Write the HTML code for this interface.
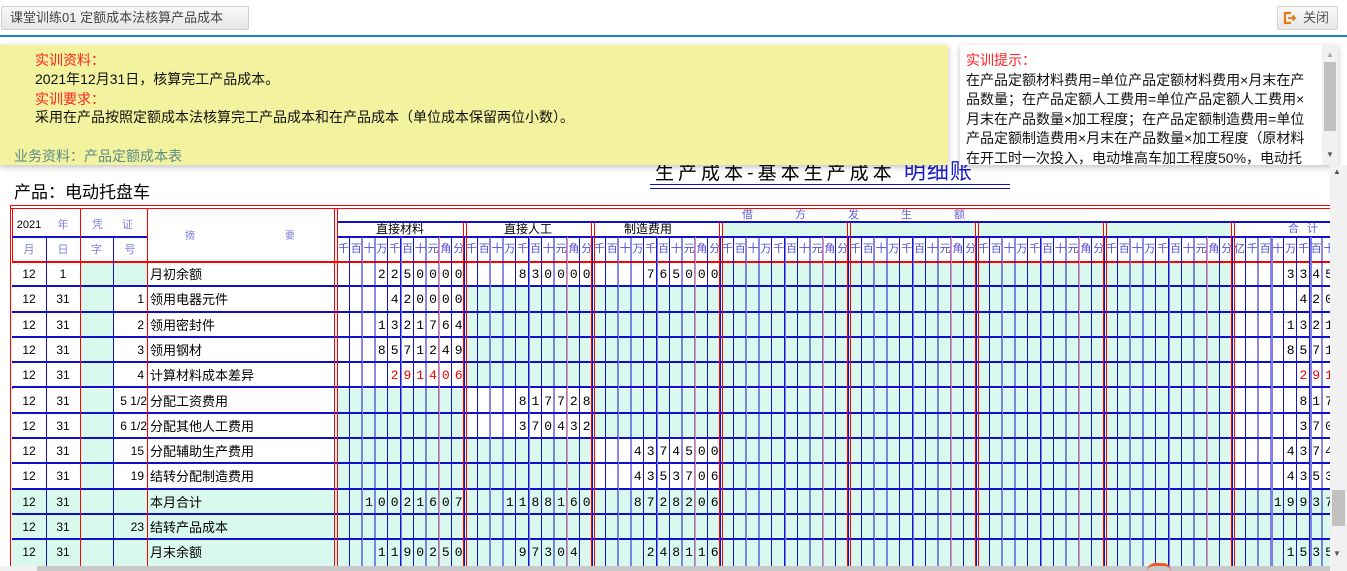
<!DOCTYPE html>
<html><head><meta charset="utf-8">
<style>
*{margin:0;padding:0;box-sizing:border-box}
html,body{width:1347px;height:571px;overflow:hidden}
body{background:#fff;font-family:"Liberation Sans","Noto Sans CJK SC",sans-serif;position:relative}
.a{position:absolute;white-space:nowrap}
.vb{position:absolute;width:1px;background:#1414d0}
.vr{position:absolute;width:1px;background:#f00}
.row{position:absolute;left:12px;width:1318px;height:25.3px;background:#d9f9ee;border-bottom:2px solid #1010cc}
.w{position:absolute;top:0;height:23.3px;background:#fff}
.g{position:absolute;top:237px;height:334px;width:128px;background-image:repeating-linear-gradient(to right,transparent 0 11.8px,#1414d0 11.8px 12.8px)}
.lb{position:absolute;width:1px;background:#8080e8}
.lp{position:absolute;width:1px;background:#f09090}
.dr{position:absolute;width:4px;border-left:1px solid #f00;border-right:1px solid #f00}
.lab{position:absolute;top:242px;font-size:11px;letter-spacing:1.8px;padding-left:1px;color:#5050d0;white-space:nowrap;line-height:14px}
.d{position:absolute;font-family:"Liberation Mono",monospace;font-size:13px;letter-spacing:5px;padding-left:2.5px;line-height:25px;white-space:nowrap;color:#000}
.red{color:#e00}
.c{position:absolute;font-size:12px;line-height:25px;text-align:center;color:#000;white-space:nowrap}
.s{position:absolute;font-size:13px;line-height:25px;color:#000;white-space:nowrap}
</style></head><body>

<div class="a" style="left:1px;top:6px;width:248px;height:24px;border:1px solid #d0d0d0;border-radius:2px;background:linear-gradient(#f8f8f8,#e6e6e6);font-size:13px;color:#444;line-height:22px;padding-left:8px">课堂训练01 定额成本法核算产品成本</div>
<div class="a" style="left:1277px;top:6px;width:61px;height:24px;border:1px solid #d4d4d4;border-radius:2px;background:linear-gradient(#f8f8f8,#e8e8e8);font-size:13px;color:#555;line-height:22px;padding-left:25px">关闭</div>
<svg class="a" style="left:1283px;top:11px" width="14" height="14" viewBox="0 0 14 14"><path d="M8 2H2v10h6" fill="none" stroke="#e87a10" stroke-width="2.2"/><path d="M5 7h7M9.5 4.5L12 7l-2.5 2.5" fill="none" stroke="#e87a10" stroke-width="1.8"/></svg>
<div class="a" style="left:0;top:35px;width:1347px;height:2px;background:#1b84d2"></div>

<div class="a" style="left:655px;top:157px;font-size:19px;letter-spacing:4px;line-height:26px;font-family:'Noto Sans CJK SC',sans-serif;color:#000">生产成本-基本生产成本 <span style="color:#1a1ad0;font-size:22px;letter-spacing:1px">明细账</span></div>
<div class="a" style="left:650px;top:184px;width:360px;height:5px;border-top:1px solid #1010c0;border-bottom:1px solid #1010c0"></div>

<div class="a" style="left:0;top:45px;width:948px;height:120px;background:#f3f29e;box-shadow:0 2px 6px rgba(0,0,0,.25);font-size:14px;line-height:19.5px">
<div class="a" style="left:35px;top:6px;color:#f22">实训资料：</div>
<div class="a" style="left:35px;top:25px;color:#111">2021年12月31日，核算完工产品成本。</div>
<div class="a" style="left:35px;top:45px;color:#f22">实训要求：</div>
<div class="a" style="left:35px;top:63px;color:#111">采用在产品按照定额成本法核算完工产品成本和在产品成本（单位成本保留两位小数）。</div>
<div class="a" style="left:14px;top:102px;color:#5b8b88">业务资料：产品定额成本表</div>
</div>
<div class="a" style="left:960px;top:45px;width:378px;height:120px;background:#fff;box-shadow:0 2px 6px rgba(0,0,0,.25);overflow:hidden;font-size:14px;line-height:19.5px">
<div style="position:absolute;left:6px;top:6px;width:352px;color:#111;white-space:normal"><span style="color:#f22">实训提示：</span><br>在产品定额材料费用=单位产品定额材料费用×月末在产品数量；在产品定额人工费用=单位产品定额人工费用×月末在产品数量×加工程度；在产品定额制造费用=单位产品定额制造费用×月末在产品数量×加工程度（原材料在开工时一次投入，电动堆高车加工程度50%，电动托</div>
<div class="a" style="left:362px;top:0;width:16px;height:120px;background:#f1f1f1"></div>
<div class="a" style="left:364px;top:17px;width:12px;height:69px;background:#c1c1c1"></div>
<div class="a" style="left:366px;top:6px;font-size:8px;line-height:8px;color:#aaa">▲</div>
<div class="a" style="left:366px;top:106px;font-size:8px;line-height:8px;color:#555">▼</div>
</div>

<div class="a" style="left:14px;top:181px;font-size:17px;line-height:24px;color:#000">产品：电动托盘车</div>

<div class="a" style="left:10px;top:205px;width:1320px;height:1px;background:#f00"></div>
<div class="a" style="left:10px;top:208px;width:1320px;height:1px;background:#f00"></div>
<div class="vr" style="left:10px;top:205px;height:366px"></div>
<div class="vr" style="left:12px;top:208px;height:363px"></div>

<div class="row" style="top:262px"><div class="w" style="left:0;width:68px"></div><div class="w" style="left:135px;width:574px"></div><div class="w" style="left:1221px;width:97px"></div></div>
<div class="row" style="top:287.3px"><div class="w" style="left:0;width:68px"></div><div class="w" style="left:101px;width:352px"></div><div class="w" style="left:1221px;width:97px"></div></div>
<div class="row" style="top:312.6px"><div class="w" style="left:0;width:68px"></div><div class="w" style="left:101px;width:352px"></div><div class="w" style="left:1221px;width:97px"></div></div>
<div class="row" style="top:337.9px"><div class="w" style="left:0;width:68px"></div><div class="w" style="left:101px;width:352px"></div><div class="w" style="left:1221px;width:97px"></div></div>
<div class="row" style="top:363.2px"><div class="w" style="left:0;width:68px"></div><div class="w" style="left:101px;width:352px"></div><div class="w" style="left:1221px;width:97px"></div></div>
<div class="row" style="top:388.5px"><div class="w" style="left:0;width:68px"></div><div class="w" style="left:101px;width:224px"></div><div class="w" style="left:453px;width:128px"></div><div class="w" style="left:1221px;width:97px"></div></div>
<div class="row" style="top:413.8px"><div class="w" style="left:0;width:68px"></div><div class="w" style="left:101px;width:224px"></div><div class="w" style="left:453px;width:128px"></div><div class="w" style="left:1221px;width:97px"></div></div>
<div class="row" style="top:439.1px"><div class="w" style="left:0;width:68px"></div><div class="w" style="left:101px;width:224px"></div><div class="w" style="left:581px;width:128px"></div><div class="w" style="left:1221px;width:97px"></div></div>
<div class="row" style="top:464.4px"><div class="w" style="left:0;width:68px"></div><div class="w" style="left:101px;width:224px"></div><div class="w" style="left:581px;width:128px"></div><div class="w" style="left:1221px;width:97px"></div></div>
<div class="row" style="top:489.7px"></div>
<div class="row" style="top:515px"></div>
<div class="row" style="top:540.3px;height:30.7px;border-bottom:none"></div>

<div class="a" style="left:12px;top:261px;width:1318px;height:2px;background:#f00"></div>
<div class="a" style="left:12px;top:236px;width:135px;height:2px;background:#1010cc"></div>
<div class="a" style="left:337px;top:236px;width:993px;height:2px;background:#1010cc"></div>
<div class="a" style="left:337px;top:221px;width:993px;height:2px;background:#1010cc"></div>
<div class="a" style="left:721px;top:223px;width:512px;height:13px;background:#d9f9ee"></div>

<div class="vb" style="left:46px;top:237px;height:334px"></div>
<div class="vr" style="left:80px;top:208px;height:363px"></div>
<div class="vb" style="left:113px;top:237px;height:334px"></div>
<div class="vr" style="left:147px;top:208px;height:363px"></div>
<div class="dr" style="left:334px;top:208px;height:363px"></div>

<div class="g" style="left:337px"></div><div class="g" style="left:465px"></div><div class="g" style="left:593px"></div><div class="g" style="left:721px"></div><div class="g" style="left:849px"></div><div class="g" style="left:977px"></div><div class="g" style="left:1105px"></div><div class="g" style="left:1233px;width:97px"></div>
<div class="lb" style="left:362px;top:237px;height:334px"></div><div class="lb" style="left:401px;top:237px;height:334px"></div><div class="lp" style="left:439px;top:237px;height:334px"></div>
<div class="lb" style="left:490px;top:237px;height:334px"></div><div class="lb" style="left:529px;top:237px;height:334px"></div><div class="lp" style="left:567px;top:237px;height:334px"></div>
<div class="lb" style="left:618px;top:237px;height:334px"></div><div class="lb" style="left:657px;top:237px;height:334px"></div><div class="lp" style="left:695px;top:237px;height:334px"></div>
<div class="lb" style="left:746px;top:237px;height:334px"></div><div class="lb" style="left:785px;top:237px;height:334px"></div><div class="lp" style="left:823px;top:237px;height:334px"></div>
<div class="lb" style="left:874px;top:237px;height:334px"></div><div class="lb" style="left:913px;top:237px;height:334px"></div><div class="lp" style="left:951px;top:237px;height:334px"></div>
<div class="lb" style="left:1002px;top:237px;height:334px"></div><div class="lb" style="left:1041px;top:237px;height:334px"></div><div class="lp" style="left:1079px;top:237px;height:334px"></div>
<div class="lb" style="left:1130px;top:237px;height:334px"></div><div class="lb" style="left:1169px;top:237px;height:334px"></div><div class="lp" style="left:1207px;top:237px;height:334px"></div>
<div class="lb" style="left:1271px;top:237px;height:334px;width:2px"></div><div class="lb" style="left:1310px;top:237px;height:334px;width:2px"></div>
<div class="dr" style="left:463px;top:222px;height:349px"></div><div class="dr" style="left:591px;top:222px;height:349px"></div><div class="dr" style="left:719px;top:222px;height:349px"></div><div class="dr" style="left:847px;top:222px;height:349px"></div><div class="dr" style="left:975px;top:222px;height:349px"></div><div class="dr" style="left:1103px;top:222px;height:349px"></div><div class="dr" style="left:1231px;top:222px;height:349px"></div>

<div class="a" style="left:12px;top:218px;width:34px;text-align:center;font-size:11px;line-height:14px;color:#000">2021</div>
<div class="a" style="left:46px;top:218px;width:34px;text-align:center;font-size:11px;line-height:14px;color:#8080e0">年</div>
<div class="a" style="left:92px;top:218px;font-size:11px;line-height:14px;color:#8080e0">凭</div>
<div class="a" style="left:122px;top:218px;font-size:11px;line-height:14px;color:#8080e0">证</div>
<div class="a" style="left:12px;top:243px;width:34px;text-align:center;font-size:11px;line-height:14px;color:#8080e0">月</div>
<div class="a" style="left:46px;top:243px;width:34px;text-align:center;font-size:11px;line-height:14px;color:#8080e0">日</div>
<div class="a" style="left:80px;top:243px;width:33px;text-align:center;font-size:11px;line-height:14px;color:#8080e0">字</div>
<div class="a" style="left:113px;top:243px;width:34px;text-align:center;font-size:11px;line-height:14px;color:#8080e0">号</div>
<div class="a" style="left:185px;top:231px;font-size:10px;line-height:12px;color:#8080e0">摘</div>
<div class="a" style="left:285px;top:231px;font-size:10px;line-height:12px;color:#8080e0">要</div>
<div class="a" style="left:742px;top:209px;font-size:11px;color:#6060d8;letter-spacing:42px;line-height:12px">借方发生额</div>
<div class="a" style="left:337px;top:222px;width:126px;text-align:center;font-size:12px;line-height:15px">直接材料</div>
<div class="a" style="left:465px;top:222px;width:126px;text-align:center;font-size:12px;line-height:15px">直接人工</div>
<div class="a" style="left:593px;top:222px;width:110px;text-align:center;font-size:12px;line-height:15px">制造费用</div>
<div class="a" style="left:1288px;top:223px;font-size:11px;color:#6060d8;letter-spacing:8px;line-height:13px">合计</div>
<div class="lab" style="left:337px">千百十万千百十元角分</div><div class="lab" style="left:465px">千百十万千百十元角分</div><div class="lab" style="left:593px">千百十万千百十元角分</div><div class="lab" style="left:721px">千百十万千百十元角分</div><div class="lab" style="left:849px">千百十万千百十元角分</div><div class="lab" style="left:977px">千百十万千百十元角分</div><div class="lab" style="left:1105px">千百十万千百十元角分</div><div class="lab" style="left:1233px">亿千百十万千百十元角分</div>

<div class="a" style="left:12px;top:262px">
<div class="c" style="left:0;width:34px;top:0">12</div><div class="c" style="left:34px;width:34px;top:0">1</div><div class="s" style="left:138px;top:0">月初余额</div>
<div class="c" style="left:0;width:34px;top:25.3px">12</div><div class="c" style="left:34px;width:34px;top:25.3px">31</div><div class="c" style="left:101px;width:31px;top:25.3px;text-align:right">1</div><div class="s" style="left:138px;top:25.3px">领用电器元件</div>
<div class="c" style="left:0;width:34px;top:50.6px">12</div><div class="c" style="left:34px;width:34px;top:50.6px">31</div><div class="c" style="left:101px;width:31px;top:50.6px;text-align:right">2</div><div class="s" style="left:138px;top:50.6px">领用密封件</div>
<div class="c" style="left:0;width:34px;top:75.9px">12</div><div class="c" style="left:34px;width:34px;top:75.9px">31</div><div class="c" style="left:101px;width:31px;top:75.9px;text-align:right">3</div><div class="s" style="left:138px;top:75.9px">领用钢材</div>
<div class="c" style="left:0;width:34px;top:101.2px">12</div><div class="c" style="left:34px;width:34px;top:101.2px">31</div><div class="c" style="left:101px;width:31px;top:101.2px;text-align:right">4</div><div class="s" style="left:138px;top:101.2px">计算材料成本差异</div>
<div class="c" style="left:0;width:34px;top:126.5px">12</div><div class="c" style="left:34px;width:34px;top:126.5px">31</div><div class="c" style="left:101px;width:34px;top:126.5px;text-align:right;white-space:pre">5 1/2</div><div class="s" style="left:138px;top:126.5px">分配工资费用</div>
<div class="c" style="left:0;width:34px;top:151.8px">12</div><div class="c" style="left:34px;width:34px;top:151.8px">31</div><div class="c" style="left:101px;width:34px;top:151.8px;text-align:right;white-space:pre">6 1/2</div><div class="s" style="left:138px;top:151.8px">分配其他人工费用</div>
<div class="c" style="left:0;width:34px;top:177.1px">12</div><div class="c" style="left:34px;width:34px;top:177.1px">31</div><div class="c" style="left:101px;width:31px;top:177.1px;text-align:right">15</div><div class="s" style="left:138px;top:177.1px">分配辅助生产费用</div>
<div class="c" style="left:0;width:34px;top:202.4px">12</div><div class="c" style="left:34px;width:34px;top:202.4px">31</div><div class="c" style="left:101px;width:31px;top:202.4px;text-align:right">19</div><div class="s" style="left:138px;top:202.4px">结转分配制造费用</div>
<div class="c" style="left:0;width:34px;top:227.7px">12</div><div class="c" style="left:34px;width:34px;top:227.7px">31</div><div class="s" style="left:138px;top:227.7px">本月合计</div>
<div class="c" style="left:0;width:34px;top:253px">12</div><div class="c" style="left:34px;width:34px;top:253px">31</div><div class="c" style="left:101px;width:31px;top:253px;text-align:right">23</div><div class="s" style="left:138px;top:253px">结转产品成本</div>
<div class="c" style="left:0;width:34px;top:278.3px">12</div><div class="c" style="left:34px;width:34px;top:278.3px">31</div><div class="s" style="left:138px;top:278.3px">月末余额</div>
</div>

<div class="d" style="left:375.4px;top:262px">2250000</div>
<div class="d" style="left:516.2px;top:262px">830000</div>
<div class="d" style="left:644.2px;top:262px">765000</div>
<div class="d" style="left:1284.2px;top:262px">3345000</div>
<div class="d" style="left:388.2px;top:287.3px">420000</div>
<div class="d" style="left:1297px;top:287.3px">420000</div>
<div class="d" style="left:375.4px;top:312.6px">1321764</div>
<div class="d" style="left:1284.2px;top:312.6px">1321764</div>
<div class="d" style="left:375.4px;top:337.9px">8571249</div>
<div class="d" style="left:1284.2px;top:337.9px">8571249</div>
<div class="d red" style="left:388.2px;top:363.2px">291406</div>
<div class="d red" style="left:1297px;top:363.2px">291406</div>
<div class="d" style="left:516.2px;top:388.5px">817728</div>
<div class="d" style="left:1297px;top:388.5px">817728</div>
<div class="d" style="left:516.2px;top:413.8px">370432</div>
<div class="d" style="left:1297px;top:413.8px">370432</div>
<div class="d" style="left:631.4px;top:439.1px">4374500</div>
<div class="d" style="left:1284.2px;top:439.1px">4374500</div>
<div class="d" style="left:631.4px;top:464.4px">4353706</div>
<div class="d" style="left:1284.2px;top:464.4px">4353706</div>
<div class="d" style="left:362.6px;top:489.7px">10021607</div>
<div class="d" style="left:503.4px;top:489.7px">1188160</div>
<div class="d" style="left:631.4px;top:489.7px">8728206</div>
<div class="d" style="left:1271.4px;top:489.7px">19937973</div>
<div class="d" style="left:375.4px;top:540.3px">1190250</div>
<div class="d" style="left:516.2px;top:540.3px">97304</div>
<div class="d" style="left:644.2px;top:540.3px">248116</div>
<div class="d" style="left:1284.2px;top:540.3px">1535670</div>

<div class="a" style="left:1330px;top:165px;width:17px;height:406px;background:#f1f1f1"></div>
<div class="a" style="left:1332px;top:490px;width:13px;height:36px;background:#c1c1c1"></div>
<div class="a" style="left:1333px;top:168px;font-size:8px;line-height:8px;color:#555">▲</div>
<div class="a" style="left:1333px;top:550px;font-size:8px;line-height:8px;color:#555">▼</div>
<div class="a" style="left:0;top:566px;width:1330px;height:5px;background:#f1f1f1"></div>
<div class="a" style="left:37px;top:566px;width:1293px;height:5px;background:#c8c8c8"></div>
<div class="a" style="left:1147px;top:563px;width:24px;height:8px;border-top:3px solid #f05a28;border-radius:8px 8px 0 0"></div>
</body></html>
